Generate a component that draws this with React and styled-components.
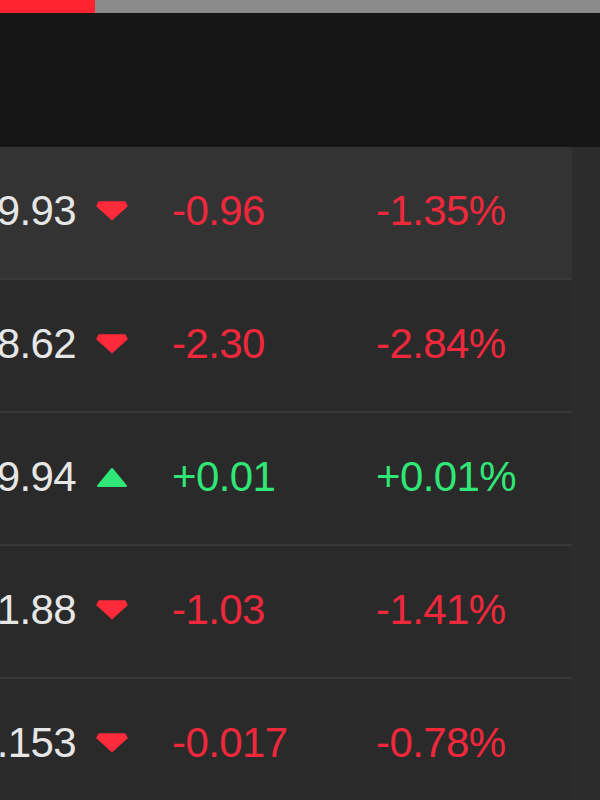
import React from "react";
import styled, { createGlobalStyle } from "styled-components";

const Global = createGlobalStyle`
  html, body { margin: 0; padding: 0; background: #2a2a2a; }
  body { font-family: "Liberation Sans", Arial, sans-serif; overflow: hidden; }
`;

const Page = styled.div`
  width: 600px;
  height: 800px;
  display: flex;
  flex-direction: column;
  background: #2a2a2a;
  overflow: hidden;
`;

const Progress = styled.div`
  height: 13px;
  background: #8a8a8a;
  display: flex;
  flex-shrink: 0;
`;

const ProgressFill = styled.div`
  width: ${(p) => p.$w}px;
  background: #ff2330;
`;

const Header = styled.div`
  height: 134px;
  background: #161616;
  flex-shrink: 0;
`;

const Body = styled.div`
  display: flex;
  flex: 1;
`;

const Table = styled.div`
  width: 572px;
  display: flex;
  flex-direction: column;
  overflow: hidden;
`;

const Gutter = styled.div`
  flex: 1;
  background: #2c2c2c;
  border-left: 1px solid #2e2e2e;
`;

const Row = styled.div`
  height: 131px;
  flex-shrink: 0;
  display: grid;
  grid-template-columns: 76px 96px 204px 1fr;
  align-items: center;
  background: ${(p) => (p.$active ? "#333333" : "#2a2a2a")};
  border-bottom: 2px solid #393939;
  font-size: 42px;
  letter-spacing: -0.6px;
  line-height: 1;
  padding-bottom: 0;
`;

const Price = styled.div`
  color: #e6e6e6;
  text-align: right;
  white-space: nowrap;
  direction: rtl;
  margin-top: -3px;
`;

const PriceText = styled.span`
  direction: ltr;
  unicode-bidi: isolate;
`;

const Arrow = styled.div`
  display: flex;
  align-items: center;
  padding-left: 20px;
  margin-top: -3px;
`;

const Value = styled.div`
  color: ${(p) => (p.$up ? "#30e676" : "#f0283c")};
  white-space: nowrap;
  margin-top: -3px;
`;

const Tri = ({ up }) =>
  up ? (
    <svg width="32" height="22" viewBox="0 0 32 22">
      <path d="M16 3 L30 20 H2 Z" fill="#30e676" stroke="#30e676" strokeWidth="2" strokeLinejoin="round" />
    </svg>
  ) : (
    <svg width="32" height="22" viewBox="0 0 32 22">
      <path d="M3 2 H29 L31 6 L16 19.5 L1 6 Z" fill="#ff2a3a" stroke="#ff2a3a" strokeWidth="1.5" strokeLinejoin="round" />
    </svg>
  );

const rows = [
  { price: "69.93", change: "-0.96", pct: "-1.35%", up: false, active: true },
  { price: "98.62", change: "-2.30", pct: "-2.84%", up: false },
  { price: "99.94", change: "+0.01", pct: "+0.01%", up: true },
  { price: "71.88", change: "-1.03", pct: "-1.41%", up: false },
  { price: "2.153", change: "-0.017", pct: "-0.78%", up: false },
];

export default function App() {
  return (
    <>
      <Global />
      <Page>
        <Progress>
          <ProgressFill $w={95} />
        </Progress>
        <Header />
        <Body>
          <Table>
            {rows.map((r, i) => (
              <Row key={i} $active={r.active}>
                <Price>
                  <PriceText>{r.price}</PriceText>
                </Price>
                <Arrow>
                  <Tri up={r.up} />
                </Arrow>
                <Value $up={r.up}>{r.change}</Value>
                <Value $up={r.up}>{r.pct}</Value>
              </Row>
            ))}
          </Table>
          <Gutter />
        </Body>
      </Page>
    </>
  );
}
